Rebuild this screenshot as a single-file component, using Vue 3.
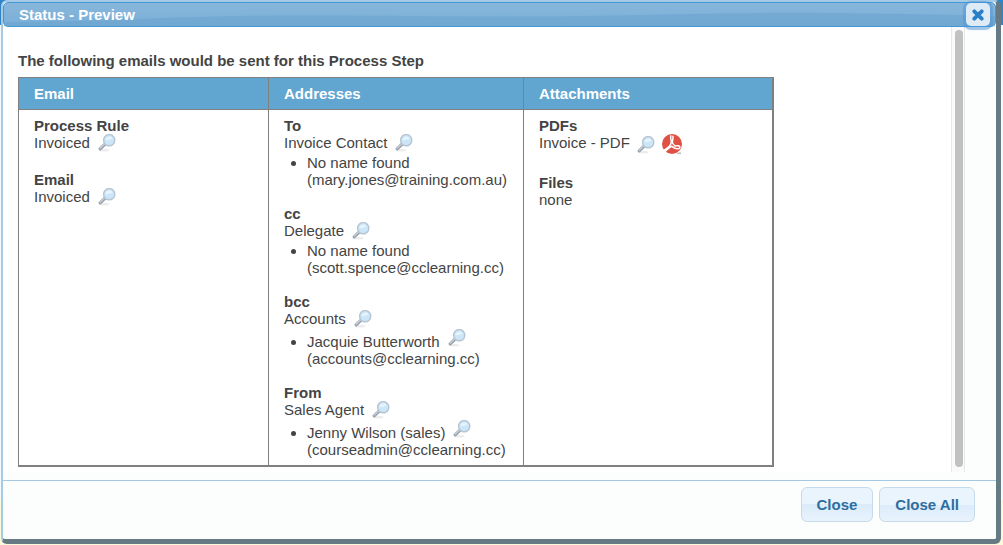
<script setup>
import { h } from 'vue'

const rules = [
  { title: 'Process Rule', name: 'Invoiced' },
  { title: 'Email', name: 'Invoiced' },
]

const recipients = [
  { title: 'To', role: 'Invoice Contact', person: 'No name found', email: 'mary.jones@training.com.au', viewable: false },
  { title: 'cc', role: 'Delegate', person: 'No name found', email: 'scott.spence@cclearning.cc', viewable: false },
  { title: 'bcc', role: 'Accounts', person: 'Jacquie Butterworth', email: 'accounts@cclearning.cc', viewable: true },
  { title: 'From', role: 'Sales Agent', person: 'Jenny Wilson (sales)', email: 'courseadmin@cclearning.cc', viewable: true },
]

const Magnifier = () =>
  h('svg', { viewBox: '0 0 18 18', width: 18, height: 18, 'aria-hidden': 'true' }, [
    h('ellipse', { cx: 6.5, cy: 16.2, rx: 5, ry: 1.2, fill: '#ececec' }),
    h('path', { d: 'M2.200 14.800 7.600 9.600', stroke: '#98a3ae', 'stroke-width': 3.2, 'stroke-linecap': 'round' }),
    h('path', { d: 'M2.200 14.200 7 9.600', stroke: '#c9d0d8', 'stroke-width': 1.2, 'stroke-linecap': 'round' }),
    h('circle', { cx: 11.2, cy: 6.2, r: 5.6, fill: '#cbe6f8', stroke: '#b7c4d2', 'stroke-width': 1.4 }),
    h('path', { d: 'M7.400 6.200a3.900 3.900 0 0 1 7.400-1.400c-2 .1-4.200 2-7.400 1.400z', fill: '#e6f4fd' }),
  ])
</script>

<template>
  <div class="page">
    <section class="dialog" role="dialog" aria-labelledby="dialog-title">
      <header class="titlebar">
        <svg class="wave" viewBox="0 0 990 24" preserveAspectRatio="none" aria-hidden="true">
          <path d="M0 20C120 19 180 13 300 13S520 16 660 12S880 12 990 13V24H0z" fill="#6ba3cf" opacity=".6" />
        </svg>
        <h1 id="dialog-title">Status - Preview</h1>
        <button class="dismiss" type="button" aria-label="Close dialog">
          <svg viewBox="0 0 12 12" width="12" height="12" aria-hidden="true">
            <path d="M2.300 2.300 9.700 9.700M9.700 2.300 2.300 9.700" stroke="#2a7fc9" stroke-width="3.800" stroke-linecap="round" />
          </svg>
        </button>
      </header>

      <div class="viewport">
        <main class="content">
          <h2>The following emails would be sent for this Process Step</h2>
          <table>
            <thead>
              <tr>
                <th class="col-email" scope="col">Email</th>
                <th class="col-addresses" scope="col">Addresses</th>
                <th scope="col">Attachments</th>
              </tr>
            </thead>
            <tbody>
              <tr>
                <td>
                  <div v-for="rule in rules" :key="rule.title" class="group">
                    <h3>{{ rule.title }}</h3>
                    <div class="entry">
                      {{ rule.name }}
                      <button class="icon" type="button" aria-label="View"><Magnifier /></button>
                    </div>
                  </div>
                </td>
                <td>
                  <div v-for="item in recipients" :key="item.title" class="group">
                    <h3>{{ item.title }}</h3>
                    <div class="entry">
                      {{ item.role }}
                      <button class="icon" type="button" aria-label="View"><Magnifier /></button>
                    </div>
                    <ul>
                      <li :class="{ viewable: item.viewable }">
                        <div class="person">
                          {{ item.person }}
                          <button v-if="item.viewable" class="icon raised" type="button" aria-label="View"><Magnifier /></button>
                        </div>
                        <div>({{ item.email }})</div>
                      </li>
                    </ul>
                  </div>
                </td>
                <td>
                  <div class="group">
                    <h3>PDFs</h3>
                    <div class="entry file">
                      Invoice - PDF
                      <button class="icon" type="button" aria-label="View"><Magnifier /></button>
                      <button class="pdf" type="button" aria-label="Open PDF">
                        <svg viewBox="0 0 20 20" width="20" height="20" aria-hidden="true">
                          <circle cx="10" cy="10" r="10" fill="#df5144" />
                          <path d="M8.900 1.800c-1 2 .8 4.400.3 6.900C8.800 11 5.600 14.300 2.600 15.800c-1 .8.200 2 1.400.9C5.500 15.400 8 12.800 9.800 12.300c2.400 2 5.400 3 7.200 2.200 1.800-1 .6-3.100-1.600-2.800l-2.200.4C11.400 10.800 10.300 9.400 10.300 8c.3-2.200 1.200-4.400.6-5.800" fill="none" stroke="#fff" stroke-width="1.500" stroke-linecap="round" stroke-linejoin="round" />
                          <path d="M15.500 18.500h3.500v1.500h-4z" fill="#b9b9b9" />
                        </svg>
                      </button>
                    </div>
                  </div>
                  <div class="group">
                    <h3>Files</h3>
                    <div>none</div>
                  </div>
                </td>
              </tr>
            </tbody>
          </table>
        </main>
        <div class="track"><div class="thumb"></div></div>
      </div>

      <footer>
        <button class="action" type="button">Close</button>
        <button class="action" type="button">Close All</button>
      </footer>
    </section>
  </div>
</template>

<style>
body {
  margin: 0;
}
</style>

<style scoped>
.page {
  box-sizing: border-box;
  display: flex;
  min-height: 100vh;
  padding: 0 2px 1px 1px;
  background: linear-gradient(#2f83c6 25px, #f7fafc 25px, #f7fafc 500px, #fbf9dc 500px);
  color: #444;
  font: 15px/17px "Liberation Sans", Arial, sans-serif;
}

.dialog {
  display: flex;
  flex: 1;
  flex-direction: column;
  min-width: 0;
  border: solid #667a84;
  border-width: 2px 5px 5px 2px;
  border-top-color: #a5cbe6;
  border-left-color: #a5cbe6;
  border-radius: 6px;
  background: #fcfefe;
}

h1,
h2,
h3 {
  margin: 0;
  font-size: 15px;
  font-weight: bold;
}

button {
  padding: 0;
  border: 0;
  background: none;
  font: inherit;
  cursor: pointer;
}

svg {
  display: block;
}

.titlebar {
  position: relative;
  display: flex;
  align-items: center;
  justify-content: space-between;
  box-sizing: border-box;
  height: 25px;
  padding: 0 5px 0 15px;
  border: 1px solid #4297d7;
  border-radius: 5px;
  background: linear-gradient(#88b6da, #7aafd8);
}

.wave {
  position: absolute;
  inset: 0;
  width: 100%;
  height: 100%;
}

h1 {
  position: relative;
  color: #fff;
}

.dismiss {
  position: relative;
  display: grid;
  place-items: center;
  width: 24px;
  height: 23px;
  border-radius: 5px;
  background: #deebf7;
  box-shadow: 0 1px 1px 3px rgba(80, 150, 214, 0.55);
}

.viewport {
  display: flex;
  flex: 1;
  margin: 0 31px 8px 0;
  background: #fff;
}

.content {
  flex: 1;
  padding: 25px 15px 5px;
}

table {
  width: 756px;
  max-width: 100%;
  margin-top: 8px;
  border: solid #808080;
  border-width: 1px 2px 2px 1px;
  border-spacing: 0;
  table-layout: fixed;
}

.col-email {
  width: 234px;
}

.col-addresses {
  width: 239px;
}

th {
  height: 31px;
  padding: 0 0 0 15px;
  border-bottom: 1px solid #808080;
  background: #61a5d1;
  color: #fff;
  text-align: left;
}

td {
  padding: 7px 0 7px 15px;
  vertical-align: top;
}

th + th,
td + td {
  border-left: 1px solid #808080;
}

.group + .group {
  margin-top: 17px;
}

.entry {
  display: flex;
  gap: 8px;
  height: 20px;
}

.file {
  gap: 7px;
  height: 23px;
}

.file .icon {
  margin-top: 2px;
}

.icon,
.pdf {
  display: block;
  height: 18px;
}

ul {
  margin: 0;
  padding-left: 23px;
}

.viewable {
  padding-top: 3px;
}

.person {
  display: inline-flex;
  gap: 8px;
  height: 17px;
  vertical-align: top;
}

.raised {
  margin-top: -4px;
}

.track {
  box-sizing: border-box;
  width: 14px;
  padding: 3px 2px 5px 3px;
  border: solid #e8e8e8;
  border-width: 0 1px;
  background: #fafafa;
}

.thumb {
  width: 8px;
  height: 100%;
  border-radius: 4px;
  background: #c1c1c1;
}

footer {
  display: flex;
  justify-content: flex-end;
  gap: 6px;
  padding: 6px 21px 17px;
  border-top: 1px solid #a6c9e2;
}

.action {
  height: 35px;
  padding: 0 15px;
  border: 1px solid #c5dbec;
  border-radius: 6px;
  background: linear-gradient(#eaf4fd 50%, #dcebfa 50%, #e8f3fd);
  color: #2e6e9e;
  font-weight: bold;
}
</style>
